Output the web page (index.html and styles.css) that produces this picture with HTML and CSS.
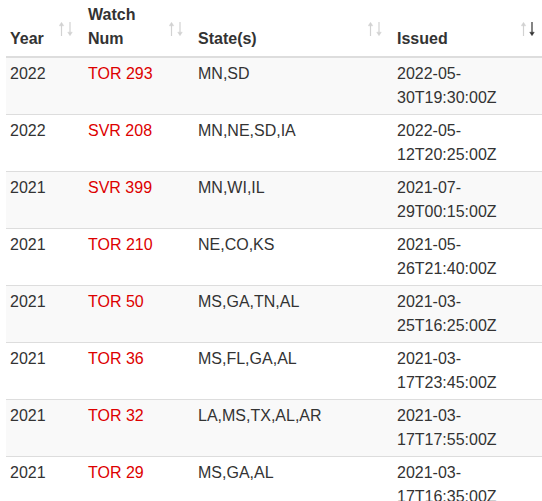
FILE: index.html
```html
<!DOCTYPE html>
<html>
<head>
<meta charset="utf-8">
<link rel="stylesheet" href="styles.css">
</head>
<body>
<table class="watches">
  <colgroup>
    <col class="c-year">
    <col class="c-num">
    <col class="c-state">
    <col class="c-issued">
  </colgroup>
  <thead>
    <tr>
      <th>Year<svg class="sort" viewBox="0 0 14 14"><g class="up"><path d="M2.5 3V14"/><path class="head" d="M0.2 3.8L2.5 0.3L4.8 3.8Z"/></g><g class="down"><path d="M11 0V10.5"/><path class="head" d="M8.7 10.2L11 13.7L13.3 10.2Z"/></g></svg></th>
      <th>Watch Num<svg class="sort" viewBox="0 0 14 14"><g class="up"><path d="M2.5 3V14"/><path class="head" d="M0.2 3.8L2.5 0.3L4.8 3.8Z"/></g><g class="down"><path d="M11 0V10.5"/><path class="head" d="M8.7 10.2L11 13.7L13.3 10.2Z"/></g></svg></th>
      <th>State(s)<svg class="sort" viewBox="0 0 14 14"><g class="up"><path d="M2.5 3V14"/><path class="head" d="M0.2 3.8L2.5 0.3L4.8 3.8Z"/></g><g class="down"><path d="M11 0V10.5"/><path class="head" d="M8.7 10.2L11 13.7L13.3 10.2Z"/></g></svg></th>
      <th>Issued<svg class="sort" viewBox="0 0 14 14"><g class="up"><path d="M2.5 3V14"/><path class="head" d="M0.2 3.8L2.5 0.3L4.8 3.8Z"/></g><g class="down active"><path d="M11 0V10.5"/><path class="head" d="M8.7 10.2L11 13.7L13.3 10.2Z"/></g></svg></th>
    </tr>
  </thead>
  <tbody>
    <tr><td>2022</td><td class="num">TOR 293</td><td>MN,SD</td><td>2022-05-30T19:30:00Z</td></tr>
    <tr><td>2022</td><td class="num">SVR 208</td><td>MN,NE,SD,IA</td><td>2022-05-12T20:25:00Z</td></tr>
    <tr><td>2021</td><td class="num">SVR 399</td><td>MN,WI,IL</td><td>2021-07-29T00:15:00Z</td></tr>
    <tr><td>2021</td><td class="num">TOR 210</td><td>NE,CO,KS</td><td>2021-05-26T21:40:00Z</td></tr>
    <tr><td>2021</td><td class="num">TOR 50</td><td>MS,GA,TN,AL</td><td>2021-03-25T16:25:00Z</td></tr>
    <tr><td>2021</td><td class="num">TOR 36</td><td>MS,FL,GA,AL</td><td>2021-03-17T23:45:00Z</td></tr>
    <tr><td>2021</td><td class="num">TOR 32</td><td>LA,MS,TX,AL,AR</td><td>2021-03-17T17:55:00Z</td></tr>
    <tr><td>2021</td><td class="num">TOR 29</td><td>MS,GA,AL</td><td>2021-03-17T16:35:00Z</td></tr>
  </tbody>
</table>
</body>
</html>
```
FILE: styles.css
```css
html {
  overflow: hidden;
}
body {
  margin: 0;
  background: #fff;
  font-family: "Liberation Sans", Arial, sans-serif;
  font-size: 16px;
  line-height: 24px;
  color: #333;
}
.watches {
  margin-left: 6px;
  width: 540px;
  table-layout: fixed;
  border-collapse: collapse;
}
.c-year { width: 78px; }
.c-num { width: 110px; }
.c-state { width: 199px; }
.c-issued { width: 153px; }

.watches th {
  position: relative;
  text-align: left;
  vertical-align: bottom;
  font-weight: bold;
  padding: 3px 30px 5px 4px;
  border-bottom: 2px solid #ddd;
}
.sort {
  position: absolute;
  right: 11.5px;
  bottom: 20px;
  width: 14px;
  height: 14px;
}
.sort g {
  stroke: #d2d2d2;
  fill: #d2d2d2;
  stroke-width: 1.2;
}
.sort .head {
  stroke-width: 0.4;
}
.sort g.active {
  stroke: #333;
  fill: #333;
}

.watches td {
  vertical-align: top;
  padding: 4px;
  border-bottom: 1px solid #ddd;
}
.watches td:last-child {
  padding-right: 30px;
}
.watches tbody tr:nth-child(odd) {
  background: #f9f9f9;
}
.watches td.num {
  color: #d00;
}
```
